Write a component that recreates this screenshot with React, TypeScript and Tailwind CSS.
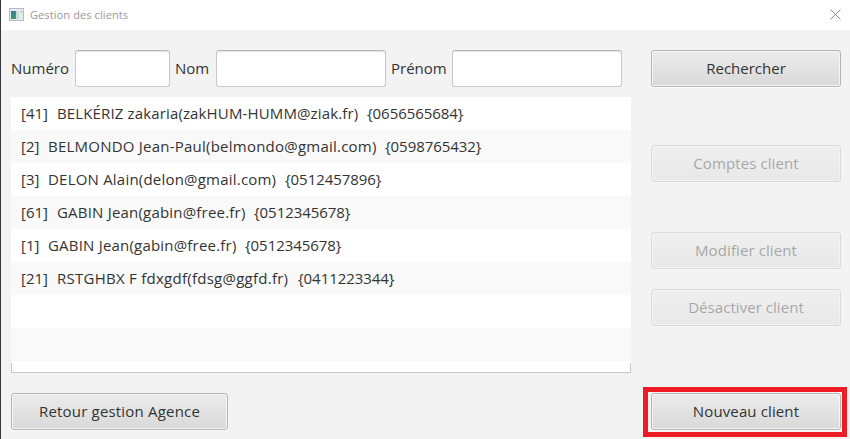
import React from "react";

type Client = { id: string; name: string; phone: string; idW: string; nameW: string; track: string };

const clients: Client[] = [
  { id: "[41]", name: "BELKÉRIZ zakaria(zakHUM-HUMM@ziak.fr)", phone: "{0656565684}", idW: "w-[36px]", nameW: "w-[310px]", track: "tracking-[0.14px]" },
  { id: "[2]", name: "BELMONDO Jean-Paul(belmondo@gmail.com)", phone: "{0598765432}", idW: "w-[27px]", nameW: "w-[337px]", track: "tracking-[0.23px]" },
  { id: "[3]", name: "DELON Alain(delon@gmail.com)", phone: "{0512457896}", idW: "w-[27px]", nameW: "w-[237px]", track: "tracking-[0.21px]" },
  { id: "[61]", name: "GABIN Jean(gabin@free.fr)", phone: "{0512345678}", idW: "w-[36px]", nameW: "w-[197px]", track: "tracking-[0.2px]" },
  { id: "[1]", name: "GABIN Jean(gabin@free.fr)", phone: "{0512345678}", idW: "w-[27px]", nameW: "w-[197px]", track: "tracking-[0.2px]" },
  { id: "[21]", name: "RSTGHBX F fdxgdf(fdsg@ggfd.fr)", phone: "{0411223344}", idW: "w-[36px]", nameW: "w-[241px]", track: "tracking-[0.26px]" },
];

function Button({ children, className = "", disabled = false }: { children: React.ReactNode; className?: string; disabled?: boolean }) {
  return (
    <button
      disabled={disabled}
      className={`flex h-[37px] shrink-0 items-center justify-center rounded-[3px] border border-[#b5b5b5] bg-linear-to-b from-[#ececec] to-[#d9d9d9] pb-px whitespace-nowrap text-[#333] shadow-[inset_0_0_0_1px_#f6f6f6,0_1px_0_#fafafa] disabled:opacity-40 ${className}`}
    >
      {children}
    </button>
  );
}

function Field({ className }: { className: string }) {
  return <input className={`h-[37px] shrink-0 rounded-[3px] border border-[#c8c8c8] border-t-[#b6b6b6] bg-white px-2 shadow-[inset_0_1px_1px_#e4e4e4] outline-none ${className}`} />;
}

export default function App() {
  return (
    <div className="flex h-[439px] w-[850px] flex-col overflow-hidden border-l border-[#39373d] bg-[#f3f3f3] font-['Open_Sans','Noto_Sans',sans-serif] text-[15px] leading-[20px] text-[#333]">
      <header className="flex h-[30px] shrink-0 items-center bg-white pr-[9px] pl-[8px]">
        <svg width="15" height="13" viewBox="0 0 15 13" shapeRendering="crispEdges" className="-mt-[2px]">
          <defs>
            <linearGradient id="pane" x1="0" y1="0" x2="1" y2="1">
              <stop offset="0" stopColor="#3c6fae" />
              <stop offset="1" stopColor="#43a860" />
            </linearGradient>
          </defs>
          <path d="M0 0h15v13H0z" fill="#b4babf" />
          <path d="M1 1h13v11H1z" fill="#e8ebee" />
          <path d="M2 3h5v8H2z" fill="url(#pane)" />
          <path d="M7 3h3v8H7z" fill="#c5ddd8" />
          <path d="M11 3h2v8h-2z" fill="#dde9e5" />
          <path d="M12 3h1v2h-1z" fill="#8fc8a2" />
        </svg>
        <h1 className="ml-[6px] text-[11px] leading-[14px] tracking-[0.1px] text-[#999]">Gestion des clients</h1>
        <svg width="11" height="11" viewBox="0 0 11 11" className="ml-auto -mt-[2px]" stroke="#8c8c8c" strokeWidth="1">
          <path d="M.5.5l10 10M10.5.5l-10 10" />
        </svg>
      </header>

      <main className="flex flex-1 items-start gap-[20px] pt-[20px] pl-[10px]">
        <section className="flex w-[620px] flex-col">
          <div className="flex items-center">
            <label className="w-[64px] pb-px">Numéro</label>
            <Field className="w-[95px]" />
            <label className="ml-[5px] w-[41px] pb-px">Nom</label>
            <Field className="w-[170px]" />
            <label className="ml-[5px] w-[61px] pb-px">Prénom</label>
            <Field className="w-[170px]" />
          </div>

          <ul className="mt-[10px] flex h-[264px] flex-col bg-white">
            {clients.map((c) => (
              <li key={c.id} className="flex h-[33px] items-center pb-[2px] pl-[10px] whitespace-pre even:bg-[#f9f9f9]">
                <span className={c.idW}>{c.id}</span>
                <span className={`${c.nameW} ${c.track}`}>{c.name}</span>
                <span className="tracking-[-0.05px]">{c.phone}</span>
              </li>
            ))}
            <li className="h-[33px]" />
            <li className="h-[33px] bg-[#f9f9f9]" />
          </ul>
          <div className="h-[2px] bg-white" />
          <div className="h-[10px] border-x border-b border-[#c8c8c8] bg-white" />

          <Button className="mt-[20px] w-[217px] tracking-[0.19px]">Retour gestion Agence</Button>
        </section>

        <aside className="flex w-[190px] flex-col">
          <Button>Rechercher</Button>
          <Button disabled className="mt-[58px] tracking-[0.1px]">Comptes client</Button>
          <Button disabled className="mt-[50px] tracking-[0.1px]">Modifier client</Button>
          <Button disabled className="mt-[20px] tracking-[0.05px]">Désactiver client</Button>
          <div className="mt-[61px] -mr-[6px] -ml-[8px] h-[50px] border-[5px] border-[#ed1c24] pt-px pr-px pl-[3px]">
            <Button className="w-[190px] tracking-[0.12px]">Nouveau client</Button>
          </div>
        </aside>
      </main>
    </div>
  );
}
